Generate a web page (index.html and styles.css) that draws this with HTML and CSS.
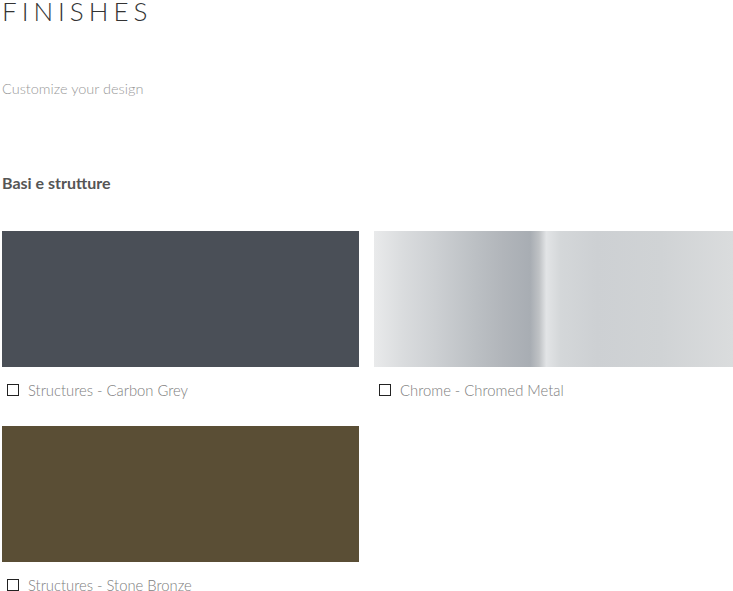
FILE: index.html
```html
<!DOCTYPE html>
<html lang="en">
<head>
  <meta charset="UTF-8" />
  <title>Finishes</title>
  <link rel="stylesheet" href="styles.css">
</head>
<body>
  <div class="page">
    <h1 class="title">FINISHES</h1>
    <p class="subtitle">Customize your design</p>

    <h2 class="group-title">Basi e strutture</h2>

    <div class="finishes">
      <label class="finish">
        <div class="swatch carbon"></div>
        <div class="finish-name"><span class="check"></span>Structures - Carbon Grey</div>
      </label>
      <label class="finish">
        <div class="swatch chrome"></div>
        <div class="finish-name"><span class="check"></span>Chrome - Chromed Metal</div>
      </label>
      <label class="finish">
        <div class="swatch bronze"></div>
        <div class="finish-name"><span class="check"></span>Structures - Stone Bronze</div>
      </label>
    </div>
  </div>
</body>
</html>
```

FILE: styles.css
```css
body {
  margin: 0;
  font-family: 'Lato', 'Open Sans', sans-serif;
  background-color: #ffffff;
  overflow: hidden;
}
.page {
  padding-left: 2px;
}
.title {
  margin: 0;
  font-size: 26px;
  line-height: 22px;
  font-weight: 300;
  letter-spacing: 5px;
  color: #333;
}
.subtitle {
  margin: 57px 0 0 0;
  font-size: 14.5px;
  line-height: 20px;
  font-weight: 300;
  color: #999;
}
.group-title {
  margin: 74px 0 0 0;
  font-size: 16px;
  line-height: 20px;
  font-weight: 700;
  color: #555;
}
.finishes {
  display: grid;
  grid-template-columns: 357px 359px;
  column-gap: 15px;
  row-gap: 28px;
  margin-top: 38px;
}
.finish {
  display: block;
  cursor: pointer;
}
.swatch {
  height: 136px;
}
.carbon {
  background-color: #4a4f57;
}
.bronze {
  background-color: #5a4e35;
}
.chrome {
  background: linear-gradient(90deg,
    #e9eaeb 0%,
    #dadcde 8%,
    #cdd0d3 17%,
    #bcc0c4 28%,
    #b1b5ba 36%,
    #a8adb3 43.5%,
    #bfc2c5 46%,
    #e2e4e6 48%,
    #d4d7d9 52%,
    #cdd0d3 62%,
    #d0d3d5 80%,
    #dadcdd 100%);
}
.finish-name {
  display: flex;
  align-items: center;
  height: 16px;
  line-height: 16px;
  margin-top: 15px;
  padding-left: 5px;
  font-size: 14.8px;
  font-weight: 300;
  color: #7d7d7d;
}
.check {
  width: 10px;
  height: 10px;
  border: 1px solid #222;
  margin-right: 9px;
}
```
